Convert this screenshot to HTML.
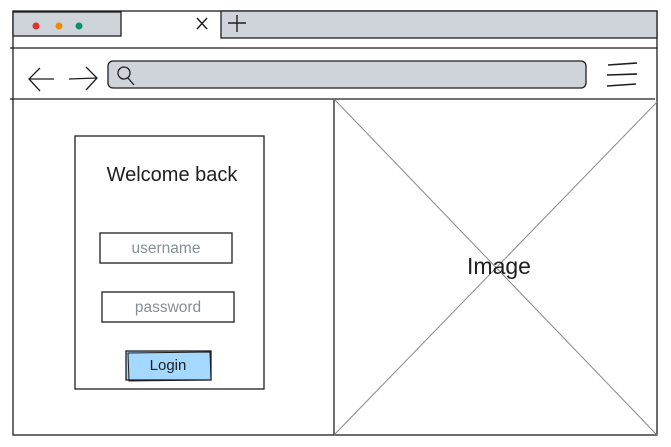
<!DOCTYPE html>
<html><head><meta charset="utf-8"><style>
html,body{margin:0;padding:0;background:#fff;width:671px;height:447px;overflow:hidden}
svg{display:block}
text{font-family:"Liberation Sans",sans-serif}
</style></head><body>
<svg width="671" height="447" viewBox="0 0 671 447" xmlns="http://www.w3.org/2000/svg">
<g fill="none" stroke="#1e1e1e" stroke-width="1.3">
<rect x="13" y="11" width="644" height="424" fill="#fff"/>
<rect x="13" y="12" width="108" height="24" fill="#ced4da"/>
<rect x="221" y="11" width="436" height="27" fill="#ced4da"/>
<line x1="10" y1="48" x2="657" y2="48"/>
<line x1="10" y1="99" x2="655" y2="99"/>
<rect x="108" y="61" width="478" height="27" rx="5" fill="#ced4da"/>
<circle cx="124" cy="73" r="6"/>
<line x1="128" y1="78" x2="134" y2="85"/>
<path d="M40 68 L29 79 L40 91 M29 79 L54 79"/>
<path d="M86 67 L97 78 L86 90 M69 79 L97 78"/>
<path d="M608 65 L637 63 M607 75 L637 74 M607 86 L636 84" stroke-width="1.6"/>
<path d="M197 18 L207 29 M207 18 L197 29" stroke-width="1.4"/>
<path d="M237 15 L237 32 M228 23 L246 23" stroke-width="1.4"/>
<line x1="334" y1="100" x2="334" y2="435"/>
<rect x="75" y="136" width="189" height="253"/>
<rect x="100" y="233" width="132" height="30"/>
<rect x="102" y="292" width="132" height="30"/>
<rect x="126" y="351" width="85" height="29" fill="#a5d8ff"/>
<path d="M128 353 L210 352 L211 380 L129 381 Z" stroke-width="1"/>
</g>
<g stroke="#888" stroke-width="1">
<line x1="335" y1="100" x2="657" y2="435"/>
<line x1="657" y1="102" x2="334" y2="435"/>
</g>
<circle cx="36" cy="26" r="3.5" fill="#e03131"/>
<circle cx="59" cy="26" r="3.5" fill="#f08c00"/>
<circle cx="79" cy="26" r="3.5" fill="#099268"/>
<text x="172" y="181" font-size="20" text-anchor="middle" fill="#1e1e1e">Welcome back</text>
<text x="166" y="253" font-size="15.5" text-anchor="middle" fill="#868e96">username</text>
<text x="168" y="312" font-size="15.5" text-anchor="middle" fill="#868e96">password</text>
<text x="168" y="370" font-size="15" text-anchor="middle" fill="#1e1e1e">Login</text>
<text x="499" y="274" font-size="23" text-anchor="middle" fill="#1e1e1e">Image</text>
</svg>
</body></html>
